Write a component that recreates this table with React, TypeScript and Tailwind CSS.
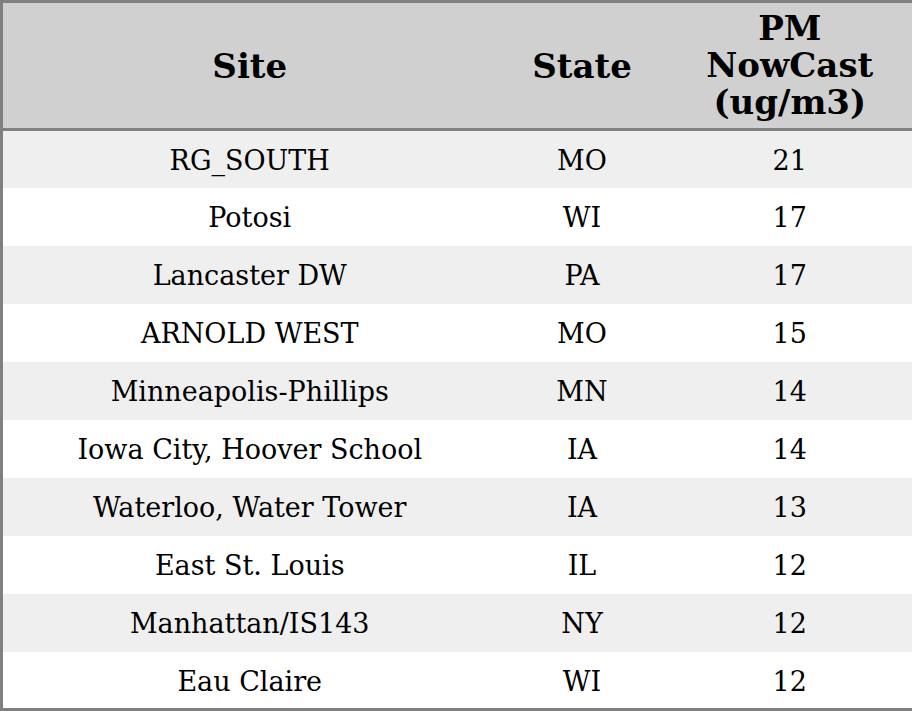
const rows = [
  { site: "RG_SOUTH", state: "MO", pm: 21 },
  { site: "Potosi", state: "WI", pm: 17 },
  { site: "Lancaster DW", state: "PA", pm: 17 },
  { site: "ARNOLD WEST", state: "MO", pm: 15 },
  { site: "Minneapolis-Phillips", state: "MN", pm: 14 },
  { site: "Iowa City, Hoover School", state: "IA", pm: 14 },
  { site: "Waterloo, Water Tower", state: "IA", pm: 13 },
  { site: "East St. Louis", state: "IL", pm: 12 },
  { site: "Manhattan/IS143", state: "NY", pm: 12 },
  { site: "Eau Claire", state: "WI", pm: 12 },
];

export default function App() {
  return (
    <div className="w-[912px] h-[711px] bg-white font-['DejaVu_Serif',serif] text-black">
      <table className="w-[912px] table-fixed border-collapse border-[3px] border-[#808080]">
        <colgroup>
          <col className="w-[495px]" />
          <col className="w-[171px]" />
          <col className="w-[246px]" />
        </colgroup>
        <thead>
          <tr className="h-[128px] bg-[#d0d0d0] border-b-[3px] border-[#808080]">
            <th className="text-[34px] leading-[37px] font-bold text-center pt-[2px]">Site</th>
            <th className="text-[34px] leading-[37px] font-bold text-center pt-[2px]">State</th>
            <th className="text-[34px] leading-[37px] font-bold text-center">
              PM
              <br />
              NowCast
              <br />
              (ug/m3)
            </th>
          </tr>
        </thead>
        <tbody>
          {rows.map((r, i) => (
            <tr
              key={r.site}
              className={`h-[58px] text-[27px] text-center ${i % 2 === 0 ? "bg-[#efefef]" : "bg-white"}`}
            >
              <td className="pt-1">{r.site}</td>
              <td className="pt-1">{r.state}</td>
              <td className="pt-1">{r.pm}</td>
            </tr>
          ))}
        </tbody>
      </table>
    </div>
  );
}
